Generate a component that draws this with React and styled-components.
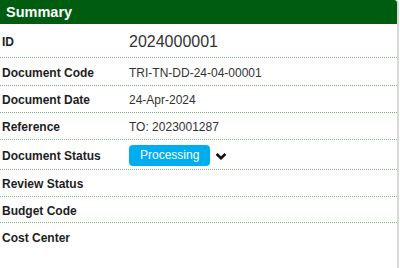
import React from "react";
import styled, { createGlobalStyle } from "styled-components";

const Global = createGlobalStyle`
  html, body { margin: 0; padding: 0; background: #fff; }
  body { font-family: "Liberation Sans", Arial, sans-serif; }
`;

const Panel = styled.section`
  width: 397px;
  height: 268px;
  border-right: 2px solid #d9d9d9;
  border-top-right-radius: 4px;
  background: #fff;
`;

const Header = styled.header`
  height: 24px;
  background: #005c0f;
  color: #fff;
  font-weight: bold;
  font-size: 14.5px;
  display: flex;
  align-items: center;
  padding-left: 6px;
  border-top-right-radius: 3px;
`;

const Row = styled.div`
  display: grid;
  grid-template-columns: 129px 1fr;
  align-items: center;
  height: ${(p) => p.$h}px;
  padding-top: 2px;
  box-sizing: border-box;
  border-bottom: ${(p) => (p.$last ? "none" : "1px dotted #72b872")};
`;

const Label = styled.div`
  font-weight: bold;
  font-size: 12px;
  color: #1e1e1e;
  padding-left: 2px;
`;

const Value = styled.div`
  font-size: ${(p) => (p.$big ? 16 : 12)}px;
  color: #333;
  display: flex;
  align-items: center;
  gap: 6px;
`;

const Badge = styled.span`
  display: inline-flex;
  align-items: center;
  justify-content: center;
  height: 21px;
  padding: 0 11px 2px;
  box-sizing: border-box;
  background: #00aef0;
  color: #fff;
  font-size: 12px;
  border-radius: 4px;
`;

const Chevron = () => (
  <svg width="10" height="8" viewBox="0 0 10 8" style={{ marginTop: 3 }}>
    <path d="M1.5 1.8 L5 5.2 L8.5 1.8" fill="none" stroke="#111" strokeWidth="2.6" strokeLinecap="square" />
  </svg>
);

const rows = [
  { label: "ID", value: "2024000001", big: true, h: 34 },
  { label: "Document Code", value: "TRI-TN-DD-24-04-00001", h: 28 },
  { label: "Document Date", value: "24-Apr-2024", h: 27 },
  { label: "Reference", value: "TO: 2023001287", h: 27 },
  { label: "Document Status", status: "Processing", h: 30 },
  { label: "Review Status", value: "", h: 27 },
  { label: "Budget Code", value: "", h: 26 },
  { label: "Cost Center", value: "", h: 28, last: true },
];

export default function App() {
  return (
    <>
      <Global />
      <Panel>
        <Header>Summary</Header>
        {rows.map((r) => (
          <Row key={r.label} $h={r.h} $last={r.last}>
            <Label>{r.label}</Label>
            <Value $big={r.big}>
              {r.status ? (
                <>
                  <Badge>{r.status}</Badge>
                  <Chevron />
                </>
              ) : (
                r.value
              )}
            </Value>
          </Row>
        ))}
      </Panel>
    </>
  );
}
